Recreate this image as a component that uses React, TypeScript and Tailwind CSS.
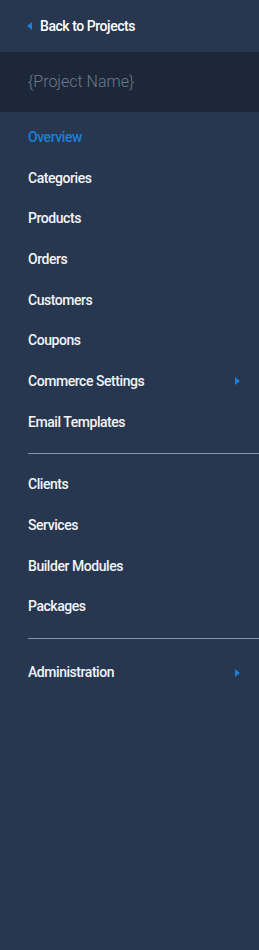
import { ReactNode } from 'react'

const Caret = ({ dir }: { dir: 'left' | 'right' }) => (
  <svg width="5" height="8" viewBox="0 0 5 8" className="shrink-0">
    {dir === 'left' ? (
      <polygon points="5,0 5,8 0,4" fill="#1b80dc" />
    ) : (
      <polygon points="0,0 0,8 5,4" fill="#1b80dc" />
    )}
  </svg>
)

const Item = ({ children, active, sub }: { children: ReactNode; active?: boolean; sub?: boolean }) => (
  <a
    href="#"
    className={
      'flex h-[40.7px] items-center justify-between pr-[19px] text-[14px] font-medium tracking-[-0.45px] ' +
      (active ? 'text-[#1b80dc]' : 'text-[#f2f4f7]')
    }
  >
    <span>{children}</span>
    {sub && <Caret dir="right" />}
  </a>
)

const App = () => {
  return (
    <div className="min-h-[950px] w-[259px] bg-[#27374f] font-['Roboto',sans-serif]">
      <a href="#" className="flex h-[52px] items-center gap-[8px] pl-[27px] text-[14px] font-medium tracking-[-0.45px] text-white">
        <Caret dir="left" />
        <span>Back to Projects</span>
      </a>
      <div className="flex h-[60px] items-center bg-[#1c2739] pl-[28px] text-[16px] font-light text-[#6c7a8d]">
        {'{Project Name}'}
      </div>
      <nav className="flex flex-col pl-[28px] pt-[5px]">
        <Item active>Overview</Item>
        <Item>Categories</Item>
        <Item>Products</Item>
        <Item>Orders</Item>
        <Item>Customers</Item>
        <Item>Coupons</Item>
        <Item sub>Commerce Settings</Item>
        <Item>Email Templates</Item>
        <div className="mb-[11px] mt-[10px] h-px bg-[#8893a3]" />
        <Item>Clients</Item>
        <Item>Services</Item>
        <Item>Builder Modules</Item>
        <Item>Packages</Item>
        <div className="mb-[13px] mt-[11px] h-px bg-[#8893a3]" />
        <Item sub>Administration</Item>
      </nav>
    </div>
  )
}

export default App
